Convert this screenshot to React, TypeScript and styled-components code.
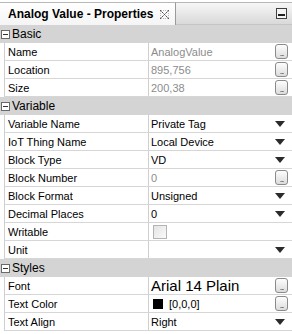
import React from 'react';
import styled, { createGlobalStyle } from 'styled-components';

const Global = createGlobalStyle`
  html, body { margin: 0; padding: 0; background: #fff; }
  body { font-family: "Liberation Sans", Arial, sans-serif; font-size: 11px; color: #000; }
`;

type Kind = 'text' | 'select' | 'check' | 'font' | 'color';

interface Prop {
  label: string;
  value?: string;
  kind: Kind;
  muted?: boolean;
  button?: boolean;
}

const sections: { title: string; rows: Prop[] }[] = [
  {
    title: 'Basic',
    rows: [
      { label: 'Name', value: 'AnalogValue', kind: 'text', muted: true, button: true },
      { label: 'Location', value: '895,756', kind: 'text', muted: true, button: true },
      { label: 'Size', value: '200,38', kind: 'text', muted: true, button: true },
    ],
  },
  {
    title: 'Variable',
    rows: [
      { label: 'Variable Name', value: 'Private Tag', kind: 'select' },
      { label: 'IoT Thing Name', value: 'Local Device', kind: 'select' },
      { label: 'Block Type', value: 'VD', kind: 'select' },
      { label: 'Block Number', value: '0', kind: 'text', muted: true, button: true },
      { label: 'Block Format', value: 'Unsigned', kind: 'select' },
      { label: 'Decimal Places', value: '0', kind: 'select' },
      { label: 'Writable', kind: 'check' },
      { label: 'Unit', value: '', kind: 'select' },
    ],
  },
  {
    title: 'Styles',
    rows: [
      { label: 'Font', value: 'Arial 14 Plain', kind: 'font', button: true },
      { label: 'Text Color', value: '[0,0,0]', kind: 'color', button: true },
      { label: 'Text Align', value: 'Right', kind: 'select' },
    ],
  },
];

const Panel = styled.div`
  width: 292px;
  height: 334px;
  overflow: hidden;
  background: #fff;
`;

const TitleBar = styled.div`
  display: flex;
  height: 25px;
  padding-top: 2px;
  box-sizing: border-box;
`;

const Tab = styled.div`
  flex: none;
  display: flex;
  align-items: center;
  padding: 0 6px 0 8px;
  box-sizing: border-box;
  border-top: 1px solid #b8b8b8;
  border-right: 1px solid #9a9a9a;
  background: linear-gradient(#ffffff, #f4f4f4);
  font-weight: bold;
  font-size: 12px;
  white-space: nowrap;
  gap: 7px;
`;

const TabFill = styled.div`
  flex: 1;
  display: flex;
  align-items: center;
  justify-content: flex-end;
  padding-right: 5px;
  border-top: 1px solid #b8b8b8;
  border-bottom: 1px solid #c4c4c4;
  background: linear-gradient(#f7f7f7, #d9d9d9);
`;

const Header = styled.div`
  height: 18px;
  display: flex;
  align-items: center;
  gap: 2px;
  padding-left: 1px;
  background: #d4d4d4;
  font-size: 12px;
`;

const Row = styled.div`
  height: 18px;
  margin-left: 4px;
  display: grid;
  grid-template-columns: 144px 1fr;
  border-left: 1px solid #cfcfcf;
  border-bottom: 1px solid #d6d6d6;
  box-sizing: border-box;
`;

const Label = styled.div`
  display: flex;
  align-items: center;
  padding-left: 3px;
  border-right: 1px solid #cfcfcf;
  white-space: nowrap;
  font-size: 11px;
`;

const Value = styled.div<{ $muted?: boolean; $big?: boolean }>`
  display: flex;
  align-items: center;
  padding: 0 4px 0 2px;
  gap: 6px;
  color: ${(p) => (p.$muted ? '#8c8c8c' : '#000')};
  font-size: ${(p) => (p.$big ? '15px' : '11px')};
  white-space: nowrap;
`;

const Grow = styled.span`
  flex: 1;
`;

const DotsButton = styled.span`
  width: 11px;
  height: 13px;
  border: 1px solid #8a8a8a;
  border-radius: 3px;
  background: linear-gradient(#fdfdfd, #dcdcdc);
  font-size: 8px;
  line-height: 17px;
  text-align: center;
  color: #222;
  overflow: hidden;
  letter-spacing: -1px;
`;

const Check = styled.span`
  margin-left: 2px;
  width: 12px;
  height: 12px;
  border: 1px solid #b4b4b4;
  background: linear-gradient(135deg, #e4e4e4, #fafafa);
`;

const Swatch = styled.span`
  width: 10px;
  height: 10px;
  background: #000;
  margin-left: 2px;
`;

const Arrow = () => (
  <svg width="10" height="6" viewBox="0 0 10 6" style={{ marginRight: 3 }}>
    <path d="M0 0h10L5 6z" fill="#2b2b2b" />
  </svg>
);

const MinusBox = () => (
  <svg width="9" height="9" viewBox="0 0 9 9">
    <rect x="0.5" y="0.5" width="8" height="8" fill="#fff" stroke="#6a6a6a" />
    <path d="M2 4.5h5" stroke="#333" />
  </svg>
);

const CloseIcon = () => (
  <svg width="9" height="9" viewBox="0 0 9 9">
    {[0, 2, 4, 6, 8].map((i) => (
      <React.Fragment key={i}>
        <rect x={i} y={i} width="1" height="1" fill="#555" />
        <rect x={8 - i} y={i} width="1" height="1" fill="#555" />
      </React.Fragment>
    ))}
    {[1, 3, 5, 7].map((i) => (
      <React.Fragment key={'b' + i}>
        <rect x={i} y={i} width="1" height="1" fill="#999" />
        <rect x={8 - i} y={i} width="1" height="1" fill="#999" />
        <rect x={i} y={0} width="1" height="1" fill="#bbb" />
        <rect x={0} y={i} width="1" height="1" fill="#bbb" />
        <rect x={i} y={8} width="1" height="1" fill="#bbb" />
        <rect x={8} y={i} width="1" height="1" fill="#bbb" />
      </React.Fragment>
    ))}
  </svg>
);

const MinimizeIcon = () => (
  <svg width="11" height="11" viewBox="0 0 11 11">
    <rect x="0.5" y="0.5" width="10" height="10" fill="#f4f4f4" stroke="#404040" />
    <rect x="2" y="6" width="7" height="2" fill="#202020" />
  </svg>
);

const PropRow = ({ p }: { p: Prop }) => (
  <Row>
    <Label>{p.label}</Label>
    <Value $muted={p.muted} $big={p.kind === 'font'}>
      {p.kind === 'check' && <Check />}
      {p.kind === 'color' && <Swatch />}
      <Grow>{p.value}</Grow>
      {p.kind === 'select' && <Arrow />}
      {p.button && <DotsButton>...</DotsButton>}
    </Value>
  </Row>
);

export default function App() {
  return (
    <>
      <Global />
      <Panel>
        <TitleBar>
          <Tab>
            Analog Value - Properties
            <CloseIcon />
          </Tab>
          <TabFill>
            <MinimizeIcon />
          </TabFill>
        </TitleBar>
        {sections.map((s) => (
          <div key={s.title}>
            <Header>
              <MinusBox />
              {s.title}
            </Header>
            {s.rows.map((r) => (
              <PropRow key={r.label} p={r} />
            ))}
          </div>
        ))}
      </Panel>
    </>
  );
}
